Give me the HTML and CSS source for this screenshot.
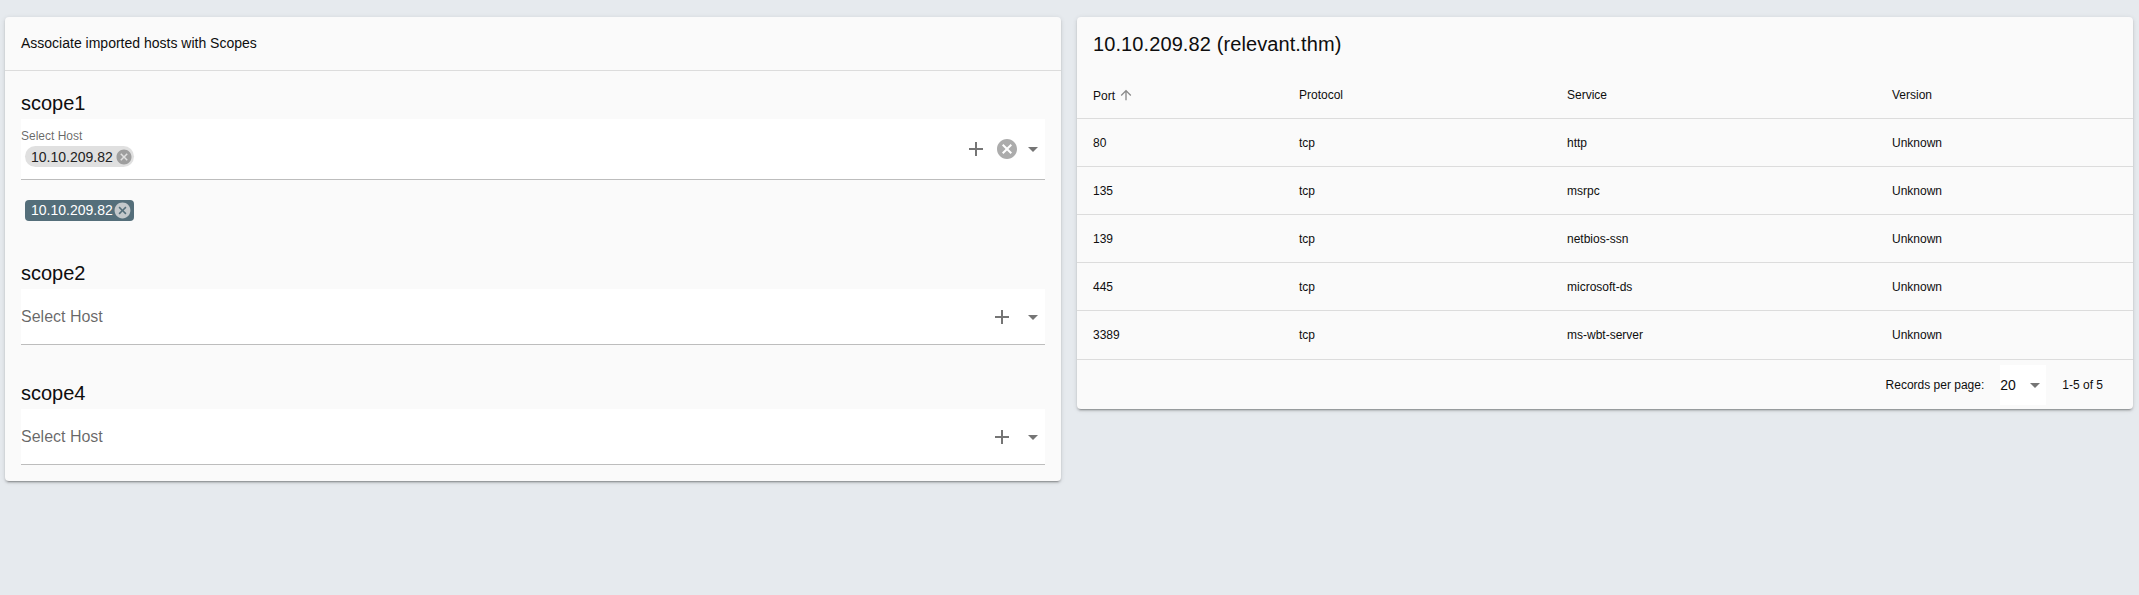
FILE: index.html
```html
<!DOCTYPE html>
<html lang="en">
<head>
	<meta charset="UTF-8">
	<title>Import hosts</title>
	<link rel="stylesheet" href="styles.css">
</head>
<body>
	<svg class="defs" width="0" height="0">
		<symbol id="i-plus" viewBox="0 0 24 24"><path d="M19,13H13V19H11V13H5V11H11V5H13V11H19V13Z"/></symbol>
		<symbol id="i-close" viewBox="0 0 24 24"><path d="M12,2C17.53,2 22,6.47 22,12C22,17.53 17.53,22 12,22C6.47,22 2,17.53 2,12C2,6.47 6.47,2 12,2M15.59,7L12,10.59L8.41,7L7,8.41L10.59,12L7,15.59L8.41,17L12,13.41L15.59,17L17,15.59L13.41,12L17,8.41L15.59,7Z"/></symbol>
		<symbol id="i-caret" viewBox="0 0 24 24"><path d="M7,10L12,15L17,10H7Z"/></symbol>
		<symbol id="i-up" viewBox="0 0 24 24"><path d="M13,20H11V8L5.5,13.5L4.08,12.08L12,4.16L19.92,12.08L18.5,13.5L13,8V20Z"/></symbol>
	</svg>

	<main class="layout">
		<section class="card">
			<header class="card-head">Associate imported hosts with Scopes</header>
			<div class="scopes">
				<div class="scope">
					<h2>scope1</h2>
					<div class="field field-filled">
						<div class="field-value">
							<span class="field-label">Select Host</span>
							<span class="chip">10.10.209.82<svg class="chip-x"><use href="#i-close"/></svg></span>
						</div>
						<svg class="icon icon-plus"><use href="#i-plus"/></svg>
						<svg class="icon icon-clear"><use href="#i-close"/></svg>
						<svg class="icon icon-caret"><use href="#i-caret"/></svg>
					</div>
					<div class="selected">
						<span class="chip chip-dark">10.10.209.82<svg class="chip-x"><use href="#i-close"/></svg></span>
					</div>
				</div>
				<div class="scope">
					<h2>scope2</h2>
					<div class="field">
						<div class="field-value"><span class="placeholder">Select Host</span></div>
						<svg class="icon icon-plus"><use href="#i-plus"/></svg>
						<svg class="icon icon-caret"><use href="#i-caret"/></svg>
					</div>
				</div>
				<div class="scope">
					<h2>scope4</h2>
					<div class="field">
						<div class="field-value"><span class="placeholder">Select Host</span></div>
						<svg class="icon icon-plus"><use href="#i-plus"/></svg>
						<svg class="icon icon-caret"><use href="#i-caret"/></svg>
					</div>
				</div>
			</div>
		</section>

		<section class="card">
			<h2 class="host-title">10.10.209.82 (relevant.thm)</h2>
			<table class="ports">
				<colgroup>
					<col class="col-port">
					<col class="col-protocol">
					<col class="col-service">
					<col>
				</colgroup>
				<thead>
					<tr>
						<th>Port<svg class="sort-arrow"><use href="#i-up"/></svg></th>
						<th>Protocol</th>
						<th>Service</th>
						<th>Version</th>
					</tr>
				</thead>
				<tbody>
					<tr><td>80</td><td>tcp</td><td>http</td><td>Unknown</td></tr>
					<tr><td>135</td><td>tcp</td><td>msrpc</td><td>Unknown</td></tr>
					<tr><td>139</td><td>tcp</td><td>netbios-ssn</td><td>Unknown</td></tr>
					<tr><td>445</td><td>tcp</td><td>microsoft-ds</td><td>Unknown</td></tr>
					<tr><td>3389</td><td>tcp</td><td>ms-wbt-server</td><td>Unknown</td></tr>
				</tbody>
			</table>
			<footer class="table-foot">
				<span>Records per page:</span>
				<div class="per-page">
					<span>20</span>
					<svg class="icon icon-caret"><use href="#i-caret"/></svg>
				</div>
				<span class="range">1-5 of 5</span>
			</footer>
		</section>
	</main>
</body>
</html>
```

FILE: styles.css
```css
html, body {
	margin: 0;
	padding: 0;
	height: 100%;
	background: #e6eaee;
	overflow: hidden;
}

body {
	font-family: "Liberation Sans", Arial, sans-serif;
	color: #0e0e0e;
}

.defs {
	position: absolute;
}

.layout {
	display: grid;
	grid-template-columns: 1056px 1056px;
	column-gap: 16px;
	align-items: start;
	padding: 17px 6px 0 5px;
}

.card {
	background: #fafafa;
	border-radius: 4px;
	box-shadow: 0 3px 1px -2px rgba(0, 0, 0, .2), 0 2px 2px 0 rgba(0, 0, 0, .14), 0 1px 5px 0 rgba(0, 0, 0, .12);
}

.card-head {
	height: 53px;
	line-height: 53px;
	padding: 0 16px;
	font-size: 14px;
	border-bottom: 1px solid #dcdcdc;
}

.scopes {
	display: flex;
	flex-direction: column;
	gap: 32px;
	padding: 16px;
}

.scope h2 {
	margin: 0;
	font-size: 20px;
	font-weight: 400;
	line-height: 32px;
}

/* select box */
.field {
	display: flex;
	align-items: center;
	height: 55px;
	background: #fff;
	border-bottom: 1px solid #bdbdbd;
}

.field-filled {
	height: 60px;
}

.field-filled .field-value {
	padding-bottom: 2px;
}

.field-value {
	flex: 1;
	display: flex;
	flex-direction: column;
	align-items: flex-start;
}

.field-label {
	font-size: 12px;
	line-height: 14px;
	margin-bottom: 3px;
	color: rgba(0, 0, 0, .6);
}

.placeholder {
	font-size: 16px;
	color: rgba(0, 0, 0, .6);
}

.icon {
	flex: none;
	width: 24px;
	height: 24px;
	fill: #757575;
}

.field .icon-plus {
	margin-right: 7px;
}

.icon-clear {
	margin-right: 2px;
	fill: #acacac;
}

.chip {
	display: inline-flex;
	align-items: center;
	height: 21px;
	margin-left: 4px;
	padding-left: 6px;
	padding-right: 1px;
	border-radius: 11px;
	background: #e0e0e0;
	font-size: 14px;
	color: #222;
}

.chip-x {
	width: 18px;
	height: 18px;
	margin-left: 2px;
	fill: #9e9e9e;
}

.selected {
	padding: 20px 0 4px;
	line-height: 21px;
	display: flex;
}

.chip-dark {
	background: #546e7a;
	border-radius: 4px;
	padding-right: 2px;
	color: #fff;
}

.chip-dark .chip-x {
	width: 19px;
	height: 19px;
	margin-left: 0;
	fill: #c3c8cb;
}

/* right card */
.host-title {
	margin: 0;
	height: 53px;
	line-height: 55px;
	padding: 0 16px;
	font-size: 20px;
	font-weight: 400;
	letter-spacing: .1px;
}

.ports {
	width: 100%;
	table-layout: fixed;
	border-collapse: separate;
	border-spacing: 0;
	font-size: 12px;
}

.col-port { width: 206px; }
.col-protocol { width: 268px; }
.col-service { width: 325px; }

.ports th, .ports td {
	padding: 0 16px;
	text-align: left;
	font-weight: 400;
	border-bottom: 1px solid #dcdcdc;
}

.ports th {
	height: 47px;
	padding-top: 1px;
}

.ports td {
	height: 47px;
}

.ports tbody tr:last-child td {
	height: 48px;
}

.sort-arrow {
	width: 16px;
	height: 16px;
	margin-left: 3px;
	vertical-align: -3px;
	fill: #8a8a8a;
}

.table-foot {
	display: flex;
	justify-content: flex-end;
	align-items: center;
	height: 49px;
	padding-right: 30px;
	font-size: 12px;
}

.per-page {
	display: flex;
	align-items: center;
	justify-content: space-between;
	box-sizing: border-box;
	width: 46px;
	height: 40px;
	margin: 0 16px 0 16px;
	background: #fff;
	font-size: 14px;
}

.per-page .icon {
	margin-right: -1px;
}
```
